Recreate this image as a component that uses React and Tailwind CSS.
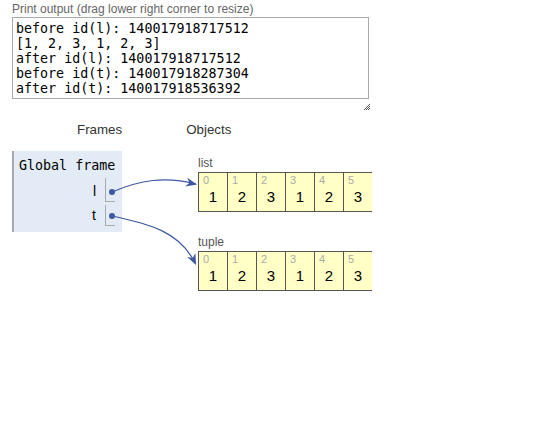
import React from 'react';

const LINK = '#3d58a3';

const printLines = [
  'before id(l): 140017918717512',
  '[1, 2, 3, 1, 2, 3]',
  'after id(l): 140017918717512',
  'before id(t): 140017918287304',
  'after id(t): 140017918536392',
];

const values = [1, 2, 3, 1, 2, 3];

// filled arrowhead with a notch, pointing along (dx, dy)
const arrowHead = (tx, ty, dx, dy) => {
  const len = Math.hypot(dx, dy);
  const ux = dx / len;
  const uy = dy / len;
  const nx = -uy;
  const ny = ux;
  const L = 11;
  const W = 4.5;
  const pts = [
    [tx, ty],
    [tx - L * ux + W * nx, ty - L * uy + W * ny],
    [tx - 0.7 * L * ux, ty - 0.7 * L * uy],
    [tx - L * ux - W * nx, ty - L * uy - W * ny],
  ];
  return pts.map((p) => p.join(',')).join(' ');
};

const HeapArray = ({ label, className }) => (
  <div className={className}>
    <div className="text-[12px] leading-[14px] text-[#555]">{label}</div>
    <div className="mt-[2px] flex h-[40px] w-[174px] border-y border-[#555] bg-[#ffffc6]">
      {values.map((v, i) => (
        <div key={i} className="w-[29px] border-l border-[#555]">
          <div className="mt-[1px] pl-[4px] text-[11px] leading-[12px] text-[#aaa]">{i}</div>
          <div className="mt-[2px] text-center text-[15px] leading-[18px] text-black">{v}</div>
        </div>
      ))}
    </div>
  </div>
);

const RefRow = ({ name, className, h, labelPad, dotTop }) => (
  <div className={`flex justify-end ${className}`}>
    <div className={`text-[14px] leading-[16px] text-black ${labelPad}`}>{name}</div>
    <div className={`ml-[9px] w-[10px] border-b border-l border-[#aaa] ${h}`}>
      <div className={`ml-[3px] h-[6px] w-[6px] rounded-full bg-[#3d58a3] ${dotTop}`} />
    </div>
  </div>
);

export default function App() {
  return (
    <div className="relative h-[433px] w-[550px] overflow-hidden bg-white font-['Liberation_Sans',Arial,sans-serif]">
      {/* Print output */}
      <div className="pl-3 pt-[2px]">
        <div className="text-[12px] leading-[14px] text-[#666]">
          Print output (drag lower right corner to resize)
        </div>
        <div className="mt-[1px] h-[82px] w-[357px] border border-[#a9a9a9] pl-[3px] pt-[3px] font-['DejaVu_Sans_Mono',monospace] text-[13.33px] leading-[15px] text-black">
          {printLines.map((line, i) => (
            <div key={i} className="whitespace-pre">{line}</div>
          ))}
        </div>
        <div className="ml-[352px] mt-[5px] h-[6px] w-[6px]">
          <svg width="6" height="6" viewBox="0 0 6 6">
            <path d="M6 0 L0 6 M6 2 L2 6 M6 4 L4 6" stroke="#555" strokeWidth="1" />
          </svg>
        </div>
      </div>

      {/* Column headers */}
      <div className="mt-[12px] flex text-[13.33px] leading-[16px] text-[#333]">
        <span className="ml-[77px]">Frames</span>
        <span className="ml-[64px]">Objects</span>
      </div>

      {/* Frames and objects */}
      <div className="mt-[13px] flex items-start pl-3">
        <div className="h-[81px] w-[110px] border-l-2 border-[#aaa] bg-[#e2ebf6] pr-[7px]">
          <div className="whitespace-nowrap pl-[5px] pt-[6px] font-['DejaVu_Sans_Mono',monospace] text-[13.33px] leading-[17px] text-black">
            Global frame
          </div>
          <RefRow name="l" className="mt-[4px]" h="h-[24px]" labelPad="pt-[5px]" dotTop="mt-[11px]" />
          <RefRow name="t" className="mt-[3px]" h="h-[21px]" labelPad="pt-[2px]" dotTop="mt-[8px]" />
        </div>

        <div className="ml-[76px] pt-[5px]">
          <HeapArray label="list" />
          <HeapArray label="tuple" className="mt-[23px]" />
        </div>
      </div>

      {/* Pointer arrows */}
      <svg className="pointer-events-none absolute left-0 top-0" width="550" height="433">
        <path d="M112 192 C 140 180, 165 176, 196 184" fill="none" stroke={LINK} strokeWidth="1.2" />
        <polygon points={arrowHead(197, 184.5, 31, 7)} fill={LINK} />
        <path d="M112 216 C 150 224, 180 232, 195 263" fill="none" stroke={LINK} strokeWidth="1.2" />
        <polygon points={arrowHead(196, 265, 14, 30)} fill={LINK} />
      </svg>
    </div>
  );
}
